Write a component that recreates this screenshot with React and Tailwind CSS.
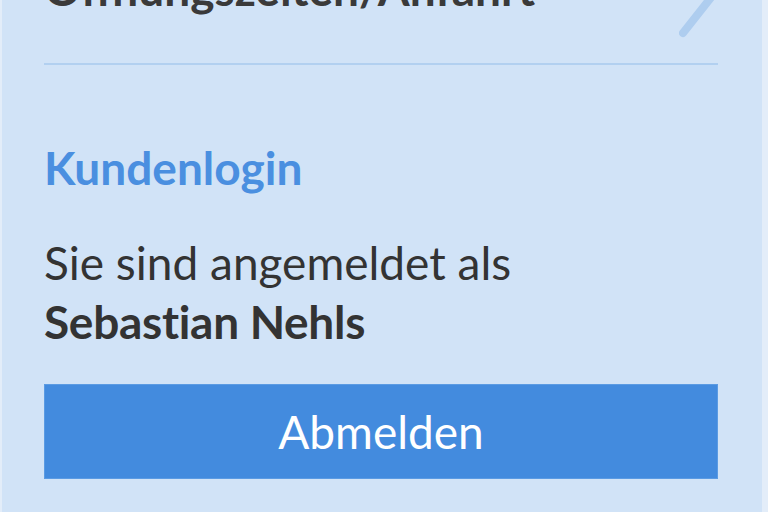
import React from 'react';

const FONT = { fontFamily: 'Lato, "Open Sans", sans-serif' };

export default function App() {
  return (
    <div className="w-[768px] h-[512px] overflow-hidden bg-[#e3edf9] flex" style={FONT}>
      <div className="ml-[2px] w-[760px] h-full bg-[#d1e3f7] pl-[42px] pr-[44px]">
        {/* Section header, scrolled partly out of view */}
        <div className="-mt-[53px] flex items-start justify-between pb-[16px] border-b-2 border-[#b2d0f0]">
          <h2 className="mt-[14px] text-[46px] leading-[1.2] font-bold text-[#3a3a3a] whitespace-nowrap">
            Öffnungszeiten/Anfahrt
          </h2>
          <svg width="39" height="100" viewBox="0 0 39 100" fill="none" className="shrink-0">
            <polyline
              points="4,10 34,48 4,86"
              stroke="#aecdef"
              strokeWidth="8"
              strokeLinecap="round"
              strokeLinejoin="round"
            />
          </svg>
        </div>

        {/* Kundenlogin */}
        <h3 className="mt-[75px] text-[46px] leading-[1.2] font-bold text-[#4a8fe0]">Kundenlogin</h3>
        <p className="mt-[38px] text-[46px] leading-[59px] text-[#333333]">
          Sie sind angemeldet als
          <br />
          <strong className="font-bold tracking-[-0.3px]">Sebastian Nehls</strong>
        </p>
        <button className="mt-[33px] w-full h-[95px] bg-[#438bde] text-white text-[46px] leading-[1.2] border border-[#5b9be3]">
          Abmelden
        </button>
      </div>
    </div>
  );
}
